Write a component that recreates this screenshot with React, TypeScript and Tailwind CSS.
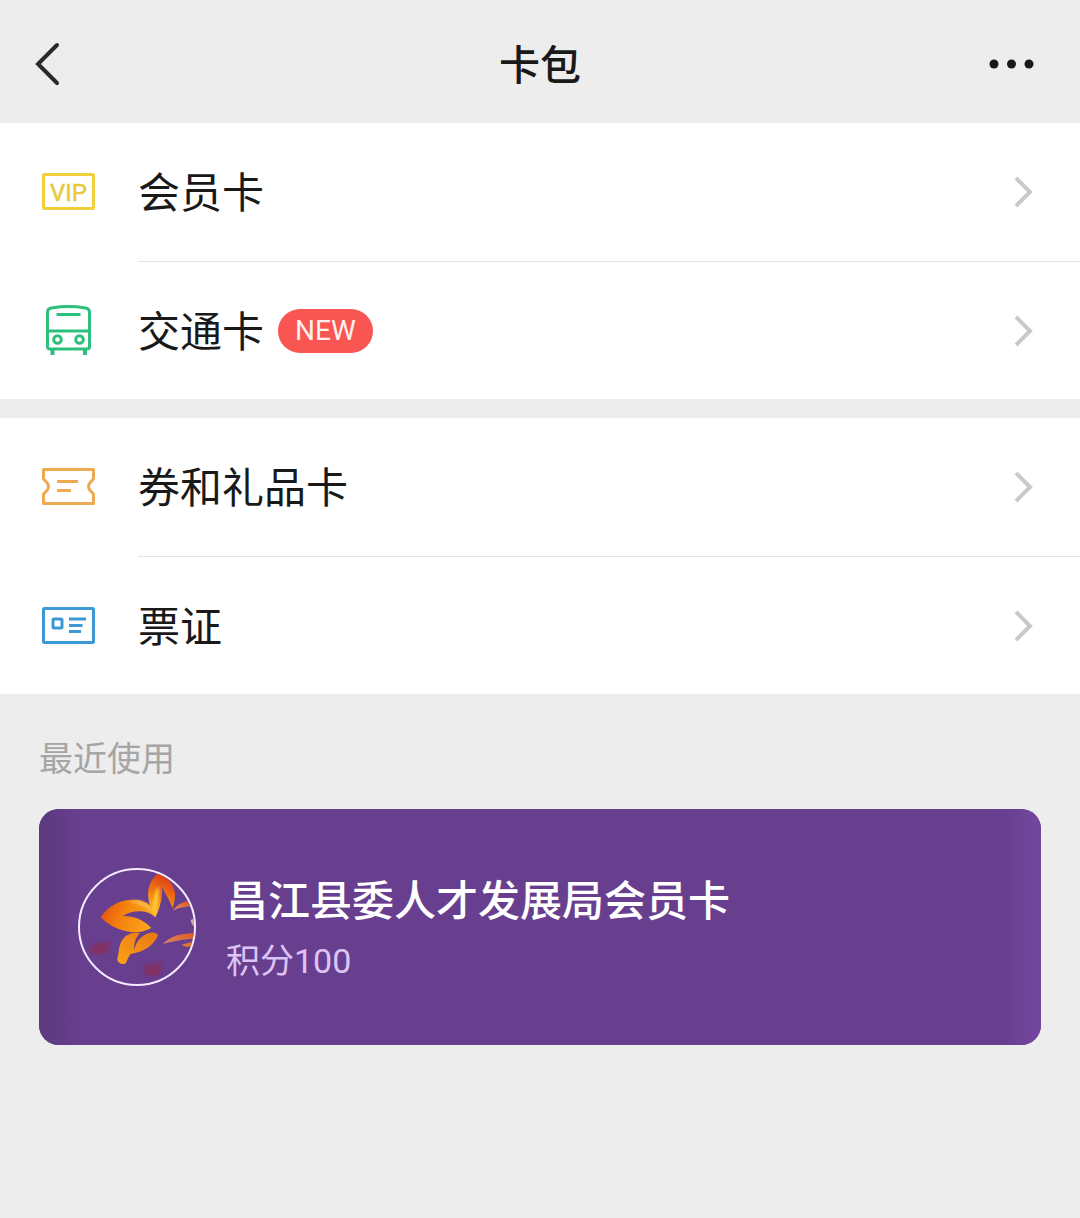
import type { ReactNode } from 'react';
import { clsx } from 'clsx';

interface MenuItem {
    id: string;
    label: string;
    icon: ReactNode;
    badge?: string;
}

function VipIcon() {
    return (
        <svg className="w-[60px] h-[60px] shrink-0" viewBox="0 0 60 60" fill="none" aria-hidden="true">
            <rect x="5.5" y="12.5" width="50" height="34" rx="1" stroke="#efd03c" strokeWidth="3" />
            <text
                x="30.5"
                y="38.5"
                textAnchor="middle"
                fill="#e9c93c"
                stroke="#e9c93c"
                strokeWidth="0.5"
                className="font-['Roboto',sans-serif] text-[24px]"
            >
                VIP
            </text>
        </svg>
    );
}

function BusIcon() {
    return (
        <svg
            className="w-[60px] h-[60px] shrink-0"
            viewBox="0 0 60 60"
            fill="none"
            stroke="#2fbf7d"
            strokeWidth="3"
            aria-hidden="true"
        >
            <path d="M9.5 12c0-2.6 1.5-3.6 4-4 10-1.7 24-1.7 34 0 2.5.4 4 1.4 4 4v34.5a2.5 2.5 0 0 1-2.5 2.5H12a2.5 2.5 0 0 1-2.5-2.5z" />
            <path d="M9.5 31h42M18.5 14.5h24" />
            <path d="M14.5 49v6M47 49v6" strokeWidth="4" />
            <circle cx="19.5" cy="39.5" r="3.8" />
            <circle cx="41.5" cy="39.5" r="3.8" />
        </svg>
    );
}

function CouponIcon() {
    return (
        <svg
            className="w-[60px] h-[60px] shrink-0"
            viewBox="0 0 60 60"
            fill="none"
            stroke="#eeaa50"
            strokeWidth="3"
            strokeLinejoin="round"
            aria-hidden="true"
        >
            <path d="M5.5 12.5h50V22c-2 2-5 4-5 7.5s3 5.5 5 7.5v9.5h-50V37c2-2 5-4 5-7.5s-3-5.5-5-7.5z" />
            <path d="M19 24.5h21M19 33.5h14" />
        </svg>
    );
}

function TicketIcon() {
    return (
        <svg
            className="w-[60px] h-[60px] shrink-0"
            viewBox="0 0 60 60"
            fill="none"
            stroke="#3d98d6"
            strokeWidth="3"
            aria-hidden="true"
        >
            <rect x="5.5" y="13.5" width="50" height="34" rx="1" />
            <rect x="15" y="24" width="9" height="9" rx="1" />
            <path d="M31 24h17M31 30.5h13.5M31 36.5h12" />
        </svg>
    );
}

function Chevron() {
    return (
        <svg
            className="w-6 h-9 shrink-0"
            viewBox="0 0 24 36"
            fill="none"
            stroke="#c9c9c9"
            strokeWidth="4"
            aria-hidden="true"
        >
            <path d="M4 4l14 14L4 32" />
        </svg>
    );
}

function LilyLogo() {
    return (
        <svg className="w-full h-full" viewBox="-30 16 342 342" aria-hidden="true">
            <defs>
                <linearGradient id="petalLeft" x1="0" y1="0.4" x2="1" y2="0.6">
                    <stop offset="0" stopColor="#e2560f" />
                    <stop offset="0.4" stopColor="#f5820c" />
                    <stop offset="1" stopColor="#fbab22" />
                </linearGradient>
                <linearGradient id="petalTop" x1="0.6" y1="0" x2="0.3" y2="1">
                    <stop offset="0" stopColor="#d9381a" />
                    <stop offset="0.5" stopColor="#f27a10" />
                    <stop offset="1" stopColor="#ffc832" />
                </linearGradient>
                <linearGradient id="petalBottom" x1="0" y1="1" x2="1" y2="0">
                    <stop offset="0" stopColor="#fba21a" />
                    <stop offset="1" stopColor="#e87612" />
                </linearGradient>
                <linearGradient id="petalRight" x1="0" y1="1" x2="1" y2="0">
                    <stop offset="0" stopColor="#d98a6c" />
                    <stop offset="1" stopColor="#e0561c" />
                </linearGradient>
                <filter id="soft" x="-20%" y="-20%" width="140%" height="140%">
                    <feGaussianBlur stdDeviation="5" />
                </filter>
            </defs>
            <path
                d="M32 158c18-28 46-46 78-51 30-5 55 0 70 15 10 11 15 23 16 36-12-11-26-17-44-18-20-1-38 4-54 14 34 0 62 10 86 36-22 12-50 16-74 10-32-6-56-20-78-42z"
                fill="url(#petalLeft)"
            />
            <path
                d="M112 110c30-5 52 1 66 15 8 9 13 18 15 26-16-20-38-33-81-41z"
                fill="#fdc257"
                filter="url(#soft)"
            />
            <path
                d="M196 158c-16-28-28-63-18-93 6-20 16-33 27-38 30 11 46 32 50 58 1 15-3 33-7 45-8-20-20-40-32-62 2 32-6 62-20 90z"
                fill="url(#petalTop)"
            />
            <path d="M193 146c-6-28-2-56 11-82 4 28 0 56-11 82z" fill="#ffd03c" filter="url(#soft)" />
            <path
                d="M150 205c-30-5-52 10-60 35-5 15-2 22-8 40-2 12 10 20 23 18 7-8 10-23 17-30 38-6 68-23 82-56-4-12-24-10-39-2-17 10-29 25-31 46-4-21 4-38 16-51z"
                fill="url(#petalBottom)"
            />
            <path d="M248 138c14-20 32-28 52-30l6 17c-21 1-41 5-58 13z" fill="url(#petalRight)" />
            <path d="M218 238c17-18 44-30 72-31l24-3v18c-34 2-69 8-96 16z" fill="url(#petalRight)" />
            <path d="M274 240l34-9v13c-14 4-24 2-34-4z" fill="#dd7a30" />
            <path d="M302 166l12-5v26c-7-4-11-12-12-21z" fill="#d8a9a0" />
            <g fill="#a02434" opacity="0.45" filter="url(#soft)">
                <path d="M4 242l56-14-4 34-18 10-38-6z" />
                <path d="M162 304l50-10 4 26-20 16-32-6z" />
            </g>
        </svg>
    );
}

const MENU_GROUPS: MenuItem[][] = [
    [
        { id: 'member', label: '会员卡', icon: <VipIcon /> },
        { id: 'transit', label: '交通卡', icon: <BusIcon />, badge: 'NEW' },
    ],
    [
        { id: 'coupons', label: '券和礼品卡', icon: <CouponIcon /> },
        { id: 'tickets', label: '票证', icon: <TicketIcon /> },
    ],
];

function MenuGroup({ items }: { items: MenuItem[] }) {
    return (
        <ul className="bg-white">
            {items.map((item, index) => (
                <li key={item.id}>
                    <a href={`#${item.id}`} className="flex items-center gap-10 pl-[38px]">
                        {item.icon}
                        <div
                            className={clsx(
                                'flex flex-1 items-center justify-between h-[138px] pr-11',
                                index > 0 && 'border-t border-[#e4e4e4]'
                            )}
                        >
                            <div className="flex items-center gap-3.5">
                                <span className="pb-1 text-[42px] leading-[60px] text-[#191919]">{item.label}</span>
                                {item.badge && (
                                    <span className="rounded-full bg-[#f95552] px-[17px] font-['Roboto',sans-serif] text-[28px] leading-[44px] text-[#fff0ee]">
                                        {item.badge}
                                    </span>
                                )}
                            </div>
                            <Chevron />
                        </div>
                    </a>
                </li>
            ))}
        </ul>
    );
}

export default function App() {
    return (
        <div className="min-h-screen bg-[#ededed] font-['Noto_Sans_CJK_SC',sans-serif]">
            {/* Header */}
            <header className="flex items-center justify-between h-[123px] px-8 text-[#191919]">
                <button type="button" aria-label="返回" className="w-16 h-12">
                    <svg className="w-16 h-12" viewBox="0 0 64 48" fill="none" stroke="#2a2a2a" strokeWidth="4">
                        <path d="M25 7L6 26l19 19" strokeLinecap="round" />
                    </svg>
                </button>
                <h1 className="text-[41px] leading-[60px] font-medium">卡包</h1>
                <button type="button" aria-label="更多" className="w-16 h-12">
                    <svg className="w-16 h-12" viewBox="0 0 64 48" fill="currentColor">
                        <circle cx="10" cy="26" r="4.5" />
                        <circle cx="27.5" cy="26" r="4.5" />
                        <circle cx="45" cy="26" r="4.5" />
                    </svg>
                </button>
            </header>

            {/* Card categories */}
            <nav className="flex flex-col gap-[19px]">
                {MENU_GROUPS.map((group) => (
                    <MenuGroup key={group[0].id} items={group} />
                ))}
            </nav>

            {/* Recently used */}
            <section className="px-[39px] pt-[38px] pb-10">
                <h2 className="pb-[27px] text-[34px] leading-[50px] text-[#a5a5a5]">最近使用</h2>
                <a
                    href="#recent-card"
                    className="flex h-[236px] rounded-[20px] overflow-hidden bg-[#683f8f]"
                >
                    <div className="w-[39px] bg-linear-to-r from-[#5c397f] to-[#683f8f]" />
                    <div className="flex flex-1 items-center gap-[30px]">
                        <div className="w-[118px] h-[118px] shrink-0 overflow-hidden rounded-full border-2 border-[#f6eaff]">
                            <LilyLogo />
                        </div>
                        <div>
                            <p className="text-[42px] leading-[60px] font-medium text-white">
                                昌江县委人才发展局会员卡
                            </p>
                            <p className="pt-2 font-['Roboto','Noto_Sans_CJK_SC',sans-serif] text-[34px] leading-[50px] text-[#dcc4f4]">
                                积分100
                            </p>
                        </div>
                    </div>
                    <div className="w-[39px] bg-linear-to-r from-[#683f8f] to-[#73479f]" />
                </a>
            </section>
        </div>
    );
}
